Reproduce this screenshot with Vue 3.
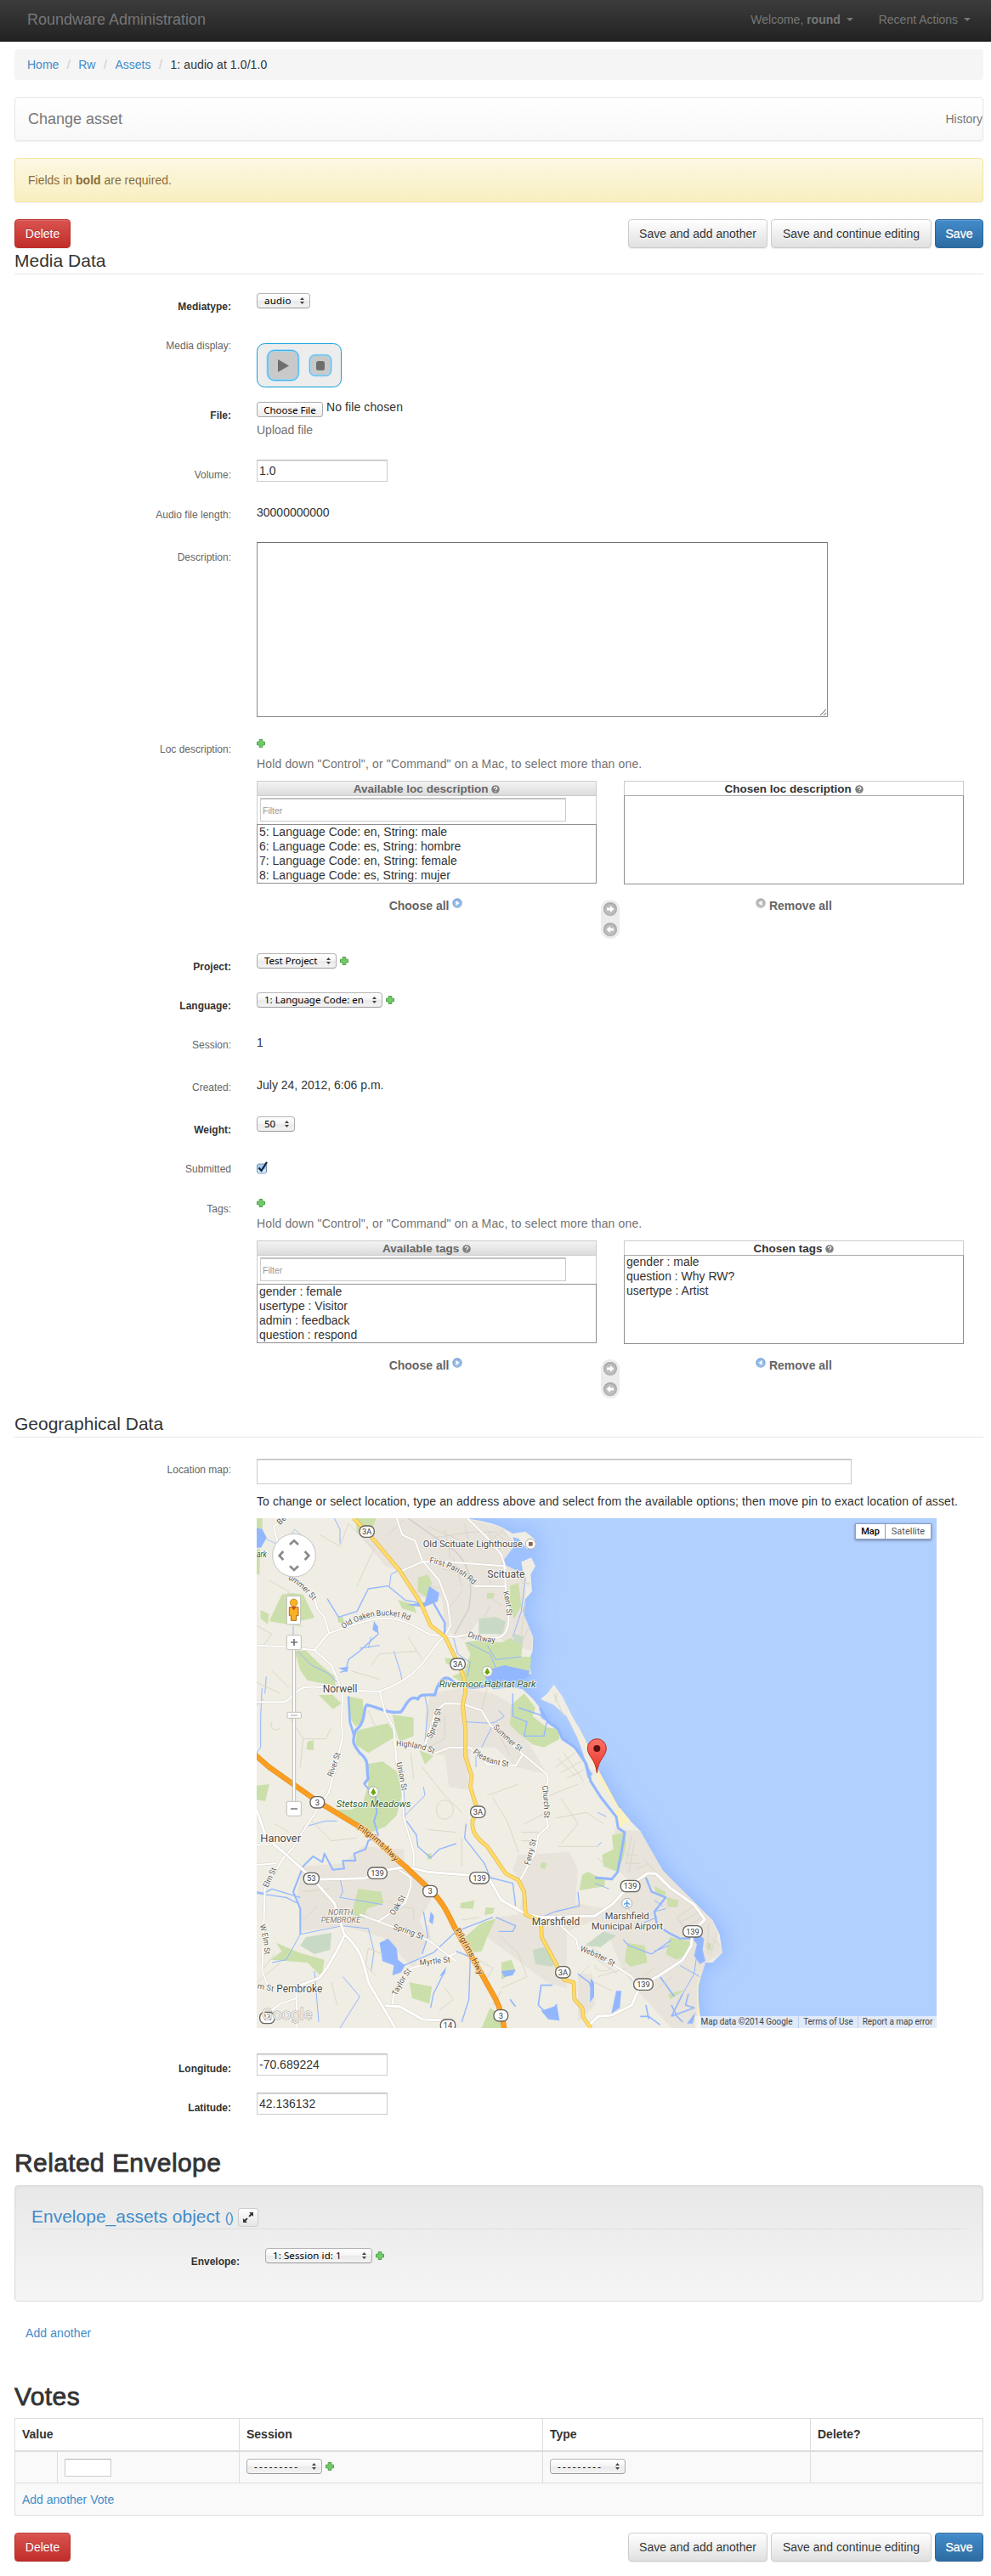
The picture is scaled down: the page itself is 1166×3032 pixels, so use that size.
<script setup>
import { h } from 'vue'

const Plus = () =>
  h('svg', { class: 'plus', width: 10, height: 10, viewBox: '0 0 10 10' }, [
    h('path', { d: 'M3.2.5h3.6v2.7h2.7v3.6H6.800v2.700H3.200V6.800H.5V3.200h2.700z', fill: '#74c96a', stroke: '#4aa546' }),
  ])

const Picker = (props) =>
  h('span', { class: 'picker', style: { width: props.w + 'px' } }, [
    h('span', { style: { letterSpacing: (props.ls || 0) + 'px' } }, props.text),
    h('svg', { width: 5, height: 8, viewBox: '0 0 5 8' }, [
      h('path', { d: 'M0 3L2.5 0 5 3zM0 5h5L2.5 8z', fill: '#444' }),
    ]),
  ])
Picker.props = ['w', 'text', 'ls']

const Help = () =>
  h('svg', { class: 'help', width: 10, height: 10, viewBox: '0 0 10 10' }, [
    h('circle', { cx: 5, cy: 5, r: 4.8, fill: '#808080' }),
    h('path', { d: 'M3.3 4c0-2.400 3.500-2.200 3.500-.2 0 1.200-1.700 1.200-1.700 2.200M5.100 7.200v1', stroke: '#fff', 'stroke-width': 1.200, fill: 'none' }),
  ])

const Round = (props) =>
  h('svg', { class: 'round', width: 12, height: 12, viewBox: '0 0 12 12' }, [
    h('circle', { cx: 6, cy: 6, r: 5.7, fill: props.on ? '#7ba7d8' : '#aaa' }),
    h('circle', { cx: 6, cy: 6.500, r: 4.500, fill: props.on ? '#98bde6' : '#c0c0c0' }),
    h('path', { d: props.left ? 'M7.500 3v6L3.500 6z' : 'M4.500 3v6l4-3z', fill: '#fff' }),
  ])
Round.props = ['on', 'left']

const Arrows = () =>
  h('svg', { class: 'arrows', width: 22, height: 46, viewBox: '0 0 22 46' }, [
    h('rect', { width: 22, height: 46, rx: 11, fill: '#ececec' }),
    h('circle', { cx: 11, cy: 11, r: 8, fill: '#aaa' }),
    h('circle', { cx: 11, cy: 11.500, r: 6.500, fill: '#bdbdbd' }),
    h('path', { d: 'M7 9.500h4V7l4.500 4-4.500 4v-2.500H7z', fill: '#fff' }),
    h('circle', { cx: 11, cy: 35, r: 8, fill: '#aaa' }),
    h('circle', { cx: 11, cy: 35.500, r: 6.500, fill: '#bdbdbd' }),
    h('path', { d: 'M15 33.500h-4V31l-4.500 4 4.500 4v-2.500h4z', fill: '#fff' }),
  ])

const selectors = {
  loc: {
    name: 'loc description',
    available: [
      '5: Language Code: en, String: male',
      '6: Language Code: es, String: hombre',
      '7: Language Code: en, String: female',
      '8: Language Code: es, String: mujer',
    ],
    chosen: [],
  },
  tags: {
    name: 'tags',
    available: ['gender : female', 'usertype : Visitor', 'admin : feedback', 'question : respond'],
    chosen: ['gender : male', 'question : Why RW?', 'usertype : Artist'],
  },
}

const land =
  'M36 21H770C800 25 870 35 905 55L940 75 985 68 1018 95 1015 125 990 130 960 92 940 88 948 112 918 140 895 160 905 195 935 222 975 205 970 175 1005 160 1020 190 1003 220 1008 280 985 305 975 350 995 400 1012 440 1010 490 998 520 1005 570 980 588 900 565 850 590 870 625 940 618 975 625 1012 660 1035 690 1040 725 1100 765 1115 800 1150 825 1190 880 1205 940 1240 910 1315 1045 1355 1090 1390 1125 1415 1180 1470 1265 1520 1320 1580 1375 1625 1425 1645 1440 1670 1490 1680 1555 1645 1590 1620 1590 1595 1620 1588 1690 1602 1780 1605 1821H36z'
const spit = 'M1038 660L1062 640 1085 608 1115 650 1150 720 1195 800 1245 915 1240 950 1205 900 1170 800 1130 720 1085 680z'

const urban = [
  'M400 80L470 21H770L905 55 945 120 900 180 985 220 985 300 975 350 1010 440 1005 490 900 450 830 370 770 450 740 440 700 400 690 300 610 300 540 205 490 190z',
  'M650 640L760 620 870 640 940 680 930 730 1000 820 1060 925 950 900 880 830 790 830 780 980 715 970 700 860 640 850 630 720z',
  'M200 1250L340 1240 410 1180 555 1190 560 1260 640 1300 650 1370 610 1440 640 1510 590 1610 480 1500 340 1460 190 1480 180 1340z',
  'M960 1210L1140 1200 1170 1260 1160 1380 1270 1400 1370 1320 1300 1250 1300 1120 1390 1125 1470 1265 1645 1440 1680 1555 1620 1590 1590 1690 1605 1821H1500L1390 1700 1330 1620 1280 1500 1230 1440 1130 1480 1130 1680 1060 1660 850 1500 880 1430 960 1420 980 1340 940 1260z',
  'M1170 1630h50l10 110-60 60z',
]
const greens = [
  'M385 21h75l-20 40-50 10z', 'M36 21h20v40H36z', 'M36 130h12l-2 90H36z', 'M80 385L125 290 160 285 200 290 240 372 160 390 205 405z', 'M50 345l30 15-5 35-25-20z',
  'M605 230l35-10 15 30-20 50-30-20z', 'M535 310l55 15 10 30-50-15z', 'M850 285h25l-5 20h-22z', 'M930 260l30-10 10 80-25 45-15-30z', 'M320 370l20 0 5 20-20 0z',
  'M770 460L830 450 900 460 930 445 975 460 970 510 1005 510 1000 575 880 560 830 620 760 600 725 580 770 560 790 500z', 'M700 515l35 0 10 30-40-10z',
  'M170 490l40-2 50 50 50 40 5 35-100-20-25-35z', 'M255 645l50 0 30 30-30 20z', 'M360 650L410 660 415 740 385 755 360 720z', 'M515 715l75 10v65l-50 20-15-50z', 'M390 770L500 745 530 790 430 850 385 820z', 'M215 810l22-5v35l-25-3z', 'M610 840l50 20-30 30z',
  'M935 680L980 640 1020 690 1010 720 1060 760 1100 765 1105 800 1050 830 1010 820 960 780 930 750z', 'M420 890L480 880 530 915 550 990 530 1070 490 1110 440 1130 380 1105 290 1050 370 1050 410 1030 430 960z',
  'M36 965l45-5-15 60-30-5z', 'M395 1330l80 10 10 40-60 20-10 35-45-15z', 'M105 1520l80 35 90 25-10 60-50-50-130-10 40-30z', 'M755 1380l50-10-5 30-45-2z', 'M845 1395l30 2-5 20-30 5z', 'M770 1500L830 1450 880 1435 850 1500 830 1550 790 1555z', 'M575 1660l80 15-10 60-60-20z', 'M900 1590l35-10 15 40-50 30z', 'M860 1750l30 20 10 51h-70z', 'M1185 1280l20-10 60 30v20l-90 15z',
  'M1290 1140l45-10 5 40-10 50-20 50-50-20-5-40 40-20z', 'M1440 1320l40 20-5 20-30-15z', 'M1485 1360l40 10-5 25-35-2z', 'M1495 1500L1565 1515 1555 1560 1520 1580 1480 1560z', 'M1345 1520l60 10 10 60-60 15-20-20z', 'M1490 1700l60-15-55 35z', 'M638 1205l15 0v20l-15 0z', 'M1040 1235l20 5-5 20-18-5z', 'M1625 1520l15 2v25l-15-5z',
]
const parks = ['M820 375L880 370 915 385 905 430 820 430z', 'M945 430l35 8-8 30-28-10z', 'M210 1500L300 1485 295 1545 240 1560 190 1530z', 'M1010 1545L1050 1535 1090 1580 1080 1605 1020 1595z', 'M1195 1530L1260 1480 1305 1495 1250 1535z']
const lakes = [
  'M645 260l35 25-5 30-50 20-60-8 65-10z', 'M36 55l20 5 15 30-20 35H36z', 'M450 385l15 20-5 20-15-10z', 'M325 550l35-5-5 20z', 'M470 1520L500 1505 530 1540 535 1580 560 1600 545 1625 515 1635 520 1600 480 1585z', 'M650 1410l12 15-5 30-12-10z', 'M680 1640l25-35-5 25z', 'M1040 1760l45-15 10-10 10 60-40-5z', 'M1215 1645l12 15v50l-15 20z', 'M1305 1690l18 0-5 60-30 20z', 'M840 560L910 540 1000 560 985 588 900 600 850 615z', 'M1570 1500l20-15 25 20-5 40 10 40-20 10-20-30 10-40z', 'M1585 1765l-30 40h20z', 'M900 1620l50-5-10 20-30 5z',
]
const rivers = [
  ['M1000 575L880 600C800 635 740 612 720 590 690 570 670 620 665 645 630 645 612 640 605 660 575 640 560 690 545 705 500 712 470 690 425 680 410 690 425 740 385 770 370 820 380 820 400 850 440 880 420 910 430 940L415 960', 10],
  ['M415 960L455 1000 460 1060 450 1090 465 1140 430 1160 420 1190 380 1205 385 1230 340 1230 345 1258 305 1262 275 1205 268 1235 235 1215 200 1250 165 1340 190 1400 190 1490', 6],
  ['M360 650L365 740 380 790', 8],
  ['M1035 690L1065 740 1100 765 1115 800 1160 830 1200 890 1215 950 1250 1005 1305 1075 1312 1115 1335 1130 1325 1190 1310 1270 1290 1295 1230 1290', 9],
  ['M1410 1290L1430 1340 1480 1360 1440 1410 1450 1460 1500 1490 1530 1505 1590 1505', 7],
  ['M1280 1330L1230 1310M1450 1430L1400 1450M1480 1400L1440 1410', 3],
  ['M310 21L330 60 330 110', 3], ['M285 305L325 370 390 350 430 270 500 260 560 310 640 325', 4], ['M505 260L510 220 545 200', 3],
  ['M660 320L700 390 700 430', 7], ['M460 400L465 430 400 490 360 520 350 560 330 565', 4], ['M400 480L470 470M430 480L440 440', 3], ['M520 490L545 570 550 600', 3],
  ['M730 440L745 500 790 530 780 580M780 460L860 500 880 550 960 560M850 470L880 520 970 510M940 440L970 350 985 230', 3],
  ['M630 650L640 700 630 810', 3], ['M775 740L860 745 880 740 910 720 890 700M870 750L830 830M810 860l0 40', 3], ['M940 640L940 720 990 740 980 790 1050 790 1060 740M960 690L1050 720', 4],
  ['M55 620L50 720 50 830 36 850M70 580l-5 60', 3], ['M165 400L165 480M180 490L230 540 290 570 320 600', 3],
  ['M565 1090L600 1140 605 1180 650 1220 680 1190 740 1170', 4], ['M555 1075L630 1000 625 970', 3], ['M555 980L560 1080', 3],
  ['M36 1340L60 1345 90 1330 190 1360M36 1345L140 1360 180 1380', 4], ['M330 1290L340 1340 330 1360 480 1385', 3], ['M160 1190L205 1110 280 1090 320 1090', 3],
  ['M190 1490L340 1460 430 1470 450 1550 440 1620M190 1490L140 1580 90 1590M240 1620L250 1740 255 1800M340 1640L400 1710 330 1821', 3],
  ['M555 1600L660 1555 740 1480 870 1430M625 1410L640 1500 620 1560M740 1550L790 1570 785 1720 760 1800M700 1620L660 1700 650 1750', 4],
  ['M775 1100L770 1150 840 1240 860 1290 940 1310 950 1390M880 1430L950 1460 940 1480 890 1480', 4], ['M1170 1340L1175 1390 1090 1410 1040 1430', 4],
  ['M1030 1740L1040 1670 1080 1670M1030 1740L1060 1770M1170 1630L1210 1660 1225 1700M930 1720L950 1745', 5],
  ['M1430 1560L1350 1530 1330 1510M1430 1560L1500 1510M1440 1550L1490 1530', 4], ['M1590 1560L1580 1630 1540 1700M1530 1600L1600 1640', 3],
  ['M1390 1780L1420 1780 1460 1810M1410 1740L1420 1790M1500 1740L1520 1780 1540 1800M1540 1700L1500 1780M1460 1640L1510 1710M1560 1700L1550 1740 1580 1750 1500 1780', 5],
  ['M1240 1060L1270 1075M1238 1180l15-15M1470 1390L1440 1370', 3], ['M36 680L60 660M130 120L170 60 240 120M36 80l90 40', 2],
]
const lanes = [
  'M640 50L830 130M660 90L790 70 880 70M700 60L720 160M770 40L790 130M850 60L870 110 940 100M820 120L900 130M690 200L790 220M730 160L760 260M850 290L900 330M860 200L860 260',
  'M80 240L150 280 110 360M260 80L330 120 360 40 450 130 390 260M36 400L90 430 60 470M90 560L150 620M370 560L470 590M300 760L280 800 200 800M440 540L470 500 600 490M430 700L470 790 430 820M570 440L620 520',
  'M90 740a18 18 0 1 0 30 20M150 720L200 800 190 900M700 720L700 800 640 830M850 620L830 700M880 760L930 860M36 600L120 640M580 850L590 940M670 1050a30 34 0 1 0 60 0a30 34 0 1 0-60 0M620 900L700 1000 760 1060M870 1010L920 1090 960 1200M850 1000L960 960M980 1100L1060 1060M760 1150L760 1250M640 1120L740 1130',
  'M970 1130h60v30h-60M100 1100L150 1130M230 1090L300 1160 390 1150M200 1340L290 1330M250 1390L200 1440M420 1410L440 1440M500 1370L540 1400M540 1390L590 1400 590 1440M640 1460L650 1520M820 1580L870 1610 840 1660M900 1690L870 1740M480 1560L430 1540 420 1600 460 1640M700 1680L730 1720 680 1760M100 1560L60 1610M36 1660L120 1590M300 1660L320 1740M960 1560L990 1640 900 1680M900 1500L960 1560M760 1440L820 1430',
  'M1070 1000L1170 960M1090 1080L1200 1060 1260 1100M1110 1010L1170 1100 1110 1170M1100 1180L1240 1180M1240 1220L1280 1260M1360 1140L1340 1240 1390 1240M1370 1160L1350 1270M1340 1210h40M1400 1220L1460 1290M1380 1260L1420 1240M1530 1450L1600 1410M1520 1430L1580 1390M1540 1470L1610 1430M1550 1480L1520 1430M1570 1500L1530 1440M1500 1370L1480 1400M1230 1600a30 20 0 1 0 60 0M1240 1640L1340 1610M1230 1660L1290 1690M1200 1520L1250 1560M1240 1580L1310 1630M1180 1630L1210 1600M1440 1610L1400 1640M1500 1640L1440 1690M1630 1450L1630 1560M1660 1480L1640 1560M1640 1500L1670 1530',
  'M1090 900L1160 850M1110 920L1180 880M1130 940L1190 910M1100 870L1160 930M1120 850L1190 950M1085 640L1120 720M1095 640L1090 670',
  'M870 80L900 110M880 70L920 105M890 60L935 95M860 100L910 60M960 230L1000 260M970 250h30M985 320L970 430M995 410L970 460M560 21L500 80M700 270L640 260M760 280L720 330M860 330L840 370',
]
const roads = [
  'M36 670H120C160 670 170 625 205 618 280 610 320 632 470 632 530 610 590 580 640 510 670 470 670 460 700 440',
  'M36 470L130 475 240 487 270 450 290 428C350 405 430 380 470 375 560 370 600 410 650 432L740 440 790 430 840 450 890 442C920 430 928 400 925 360L915 270 910 190',
  'M130 30L95 50 140 210 240 300 250 340 275 370 292 428',
  'M240 487L300 540 325 600 340 650 335 740 340 790 315 900 290 990 250 1050 210 1110 160 1190 130 1220 65 1330 60 1500 55 1620 75 1670',
  'M530 21L550 80 595 100 620 170 680 240 710 320 720 400 700 438', 'M545 208L620 175 700 175 910 190M800 260L915 262', 'M780 21L850 90 900 150 915 200',
  'M470 632L490 710 520 760 530 880 550 980 555 1080 590 1200 590 1250M560 1250L535 1260 580 1290 580 1320 560 1380 465 1445 400 1420',
  'M630 820L670 700 700 675 765 677 830 700 860 750 970 850 1060 925 1065 950 1045 1000 1065 1110 1030 1140 1020 1200 965 1300', 'M665 850L720 830 790 832 850 890 950 895 975 855',
  'M36 1175L95 1172M36 1245L105 1240M175 1680L178 1821M178 1715L120 1735 60 1780', 'M515 1742L520 1690 580 1610 700 1575 740 1555', 'M465 1445L560 1480 640 1510 740 1585', 'M1110 1460L1165 1510 1170 1540 1300 1600 1360 1640 1380 1670',
]
const mainRoads = [
  'M230 1297L420 1292 480 1265 570 1252 640 1270 790 1282 860 1300 900 1370 985 1418 1040 1430 1230 1425 1290 1385 1350 1320 1415 1275 1445 1276 1500 1330 1580 1385 1618 1438 1575 1480 1570 1530 1540 1580 1450 1640 1390 1670 1360 1740 1290 1776 1240 1780 1200 1821',
  'M36 1050L70 1150 130 1200 225 1285 310 1380 345 1490C400 1540 410 1570 430 1660L525 1821', 'M345 1495C310 1570 280 1620 255 1645L175 1675', 'M490 1742L540 1745 620 1790 710 1795',
]
const yellowRoad =
  'M378 21L425 68 540 205 615 320 650 400 700 438 740 520C770 580 775 600 772 640L763 680 772 760V860L795 930 790 970 815 1050 798 1090C795 1120 800 1140 850 1180L915 1275 960 1300 980 1340 985 1420 1040 1445 1042 1500 1085 1580 1120 1650 1155 1660 1158 1720 1185 1750 1190 1785 1215 1821'
const orangeRoad = 'M30 856L78 898 165 960 250 1020 390 1105C450 1140 520 1220 560 1250L650 1335C700 1380 720 1440 740 1475L830 1630 880 1720C900 1760 905 1790 910 1825'

// [text, left, baseline, width, size, kind]
const places = [
  ['Old Scituate Lighthouse', 623, 124, 352, 32, 'poi'],
  ['Scituate', 850, 231, 132, 36, 'town'],
  ['Norwell', 269, 635, 122, 36, 'town'],
  ['Hanover', 49, 1163, 143, 36, 'town'],
  ['Pembroke', 106, 1695, 162, 36, 'town'],
  ['Marshfield', 1007, 1458, 170, 36, 'town'],
  ['Rivermoor Habitat Park', 680, 617, 342, 30, 'park'],
  ['Stetson Meadows', 317, 1042, 263, 30, 'park'],
  ['ark', 36, 158, 35, 30, 'park'],
  ['NORTH', 288, 1423, 88, 27, 'area'],
  ['PEMBROKE', 263, 1450, 140, 27, 'area'],
  ['Marshfield', 1265, 1437, 156, 32, 'poi'],
  ['Municipal Airport', 1218, 1473, 252, 32, 'poi'],
]
// [text, x0, y0, control x, control y, x1, y1, kind]
const streetData = [
  ['Be', 118, 46, 130, 35, 142, 24],
  ['ummer St', 146, 236, 195, 262, 234, 312],
  ['Old Oaken Bucket Rd', 342, 412, 460, 335, 575, 382],
  ['First Parish Rd', 645, 178, 740, 195, 800, 256],
  ['Kent St', 905, 282, 918, 320, 918, 366],
  ['Driftway', 779, 438, 830, 462, 878, 458],
  ['Spring St', 652, 800, 680, 750, 686, 694],
  ['Summer St', 870, 760, 915, 810, 965, 845],
  ['Highland St', 528, 826, 600, 826, 660, 852],
  ['Pleasant St', 798, 850, 850, 892, 925, 898],
  ['River St', 303, 935, 318, 893, 332, 852],
  ['Union St', 529, 885, 540, 930, 548, 984],
  ['Church St', 1043, 966, 1052, 1020, 1050, 1080],
  ['Ferry St', 1000, 1247, 1010, 1200, 1024, 1158],
  ['Elm St', 75, 1327, 90, 1295, 106, 1260],
  ['W Elm St', 46, 1458, 60, 1500, 64, 1562],
  ['Oak St', 520, 1425, 541, 1394, 562, 1358],
  ['Spring St', 517, 1472, 570, 1485, 620, 1510],
  ['Myrtle St', 612, 1600, 666, 1594, 720, 1588],
  ['Taylor St', 530, 1708, 550, 1660, 583, 1620],
  ['m St', 38, 1682, 65, 1686, 95, 1692],
  ['Webster St', 1176, 1548, 1240, 1570, 1294, 1604],
  ['Pilgrims Hwy', 390, 1118, 470, 1165, 524, 1234, 'hwy'],
  ['Pilgrims Hwy', 735, 1477, 780, 1545, 820, 1634, 'hwy'],
]
const curveLength = (x0, y0, cx, cy, x1, y1) => {
  let sum = 0
  let px = x0
  let py = y0
  for (let i = 1; i <= 20; i++) {
    const t = i / 20
    const x = (1 - t) * (1 - t) * x0 + 2 * t * (1 - t) * cx + t * t * x1
    const y = (1 - t) * (1 - t) * y0 + 2 * t * (1 - t) * cy + t * t * y1
    sum += Math.hypot(x - px, y - py)
    px = x
    py = y
  }
  return sum
}
const streets = streetData.map(([text, x0, y0, cx, cy, x1, y1, kind]) => {
  const len = curveLength(x0, y0, cx, cy, x1, y1)
  // the guide runs a little past its end so that the last letter always fits
  const ex = ((x1 - cx) / Math.hypot(x1 - cx, y1 - cy)) * 20
  const ey = ((y1 - cy) / Math.hypot(x1 - cx, y1 - cy)) * 20
  return { text, len: len.toFixed(1), kind: kind || 'street', d: `M${x0} ${y0}Q${cx} ${cy} ${x1} ${y1}l${ex} ${ey}` }
})
const shields = [
  ['3A', 425, 68, 52], ['3A', 746, 536, 52], ['3A', 817, 1058, 52], ['3A', 1117, 1624, 52],
  ['3', 250, 1024, 50], ['3', 648, 1338, 50], ['3', 898, 1777, 50],
  ['53', 229, 1293, 54], ['139', 462, 1274, 68], ['139', 822, 1291, 68], ['139', 1355, 1320, 68], ['139', 1575, 1480, 68], ['139', 1401, 1667, 68],
  ['14', 73, 1785, 52], ['14', 711, 1811, 52],
]
</script>

<template>
  <div class="page">
    <nav class="navbar">
      <a class="brand">Roundware Administration</a>
      <div class="nav-right">
        <a>Welcome, <b>round</b> <i class="caret"></i></a>
        <a>Recent Actions <i class="caret"></i></a>
      </div>
    </nav>

    <main class="content">
      <ol class="breadcrumb">
        <li><a>Home</a></li>
        <li><a>Rw</a></li>
        <li><a>Assets</a></li>
        <li class="here">1: audio at 1.0/1.0</li>
      </ol>

      <header class="titlebar"><span class="title">Change asset</span><span>History</span></header>
      <div class="notice">Fields in <b>bold</b> are required.</div>

      <div class="actions">
        <button class="btn danger">Delete</button>
        <span class="gap"></span>
        <button class="btn wide1">Save and add another</button>
        <button class="btn wide2">Save and continue editing</button>
        <button class="btn primary">Save</button>
      </div>

      <h3 class="legend">Media Data</h3>
      <section class="form">
        <div class="row h46"><label class="req">Mediatype:</label><div class="ctl sel"><Picker :w="63" text="audio" :ls="0.2" /></div></div>
        <div class="row h82">
          <label>Media display:</label>
          <div class="ctl">
            <div class="player">
              <svg width="100" height="52" viewBox="0 0 100 52">
                <rect x=".5" y=".5" width="99" height="51" rx="9" fill="#ededed" stroke="#129fdc" />
                <rect x="13" y="8.500" width="36" height="35" rx="8" fill="#c9c9c9" stroke="#a5d8f5" stroke-width="3" />
                <rect x="13" y="8.500" width="36" height="35" rx="8" fill="none" stroke="#3fb0ea" />
                <path d="M25 19v15l13-7.500z" fill="#6e6e6e" />
                <rect x="62.500" y="14" width="25" height="24" rx="6" fill="#c9c9c9" stroke="#a5d8f5" stroke-width="2.500" />
                <rect x="62.500" y="14" width="25" height="24" rx="6" fill="none" stroke="#5fbbe8" />
                <rect x="70" y="21" width="10" height="11" rx="2.500" fill="#6e6e6e" />
              </svg>
            </div>
          </div>
        </div>
        <div class="row h70">
          <label class="req">File:</label>
          <div class="ctl sel">
            <div class="file"><span class="choose">Choose File</span><span>No file chosen</span></div>
            <p class="muted upload">Upload file</p>
          </div>
        </div>
        <div class="row h47"><label>Volume:</label><div class="ctl"><div class="input">1.0</div></div></div>
        <div class="row h50"><label>Audio file length:</label><div class="ctl val">30000000000</div></div>
        <div class="row h226">
          <label>Description:</label>
          <div class="ctl">
            <div class="area"><svg width="9" height="9" viewBox="0 0 9 9"><path d="M1 8L8 1M5 8l3-3" stroke="#666" fill="none" /></svg></div>
          </div>
        </div>
        <div v-for="(s, key) in { loc: selectors.loc }" :key="key" class="row h256">
          <label>Loc description:</label>
          <div class="ctl add">
            <Plus />
            <p class="muted hold">Hold down "Control", or "Command" on a Mac, to select more than one.</p>
            <div class="dual">
              <div class="col">
                <h4 class="grad">Available {{ s.name }} <Help /></h4>
                <div class="filter"><div class="finput">Filter</div></div>
                <ul class="list"><li v-for="o in s.available" :key="o">{{ o }}</li></ul>
                <div class="all">Choose all <Round :on="true" /></div>
              </div>
              <Arrows />
              <div class="col">
                <h4>Chosen {{ s.name }} <Help /></h4>
                <ul class="list tall"></ul>
                <div class="all rem"><Round :left="true" /> Remove all</div>
              </div>
            </div>
          </div>
        </div>
        <div class="row h46"><label class="req">Project:</label><div class="ctl sel"><Picker :w="94" text="Test Project" /><Plus /></div></div>
        <div class="row h46"><label class="req">Language:</label><div class="ctl sel"><Picker :w="148" text="1: Language Code: en" /><Plus /></div></div>
        <div class="row h50"><label>Session:</label><div class="ctl val">1</div></div>
        <div class="row h50"><label>Created:</label><div class="ctl val">July 24, 2012, 6:06 p.m.</div></div>
        <div class="row h46"><label class="req">Weight:</label><div class="ctl sel"><Picker :w="45" text="50" /></div></div>
        <div class="row h47">
          <label>Submitted</label>
          <div class="ctl">
            <svg class="check" width="14" height="15" viewBox="0 0 14 15">
              <rect x=".5" y="3" width="11" height="11" rx="2" fill="#a5cdf3" stroke="#7d93b0" />
              <rect x="1" y="9" width="10" height="4.500" rx="1.500" fill="#c9e9fd" />
              <path d="M2.500 7.500L5.500 11 12 .8" fill="none" stroke="#10243c" stroke-width="2.200" />
            </svg>
          </div>
        </div>
        <div v-for="(s, key) in { tags: selectors.tags }" :key="key" class="row h256">
          <label>Tags:</label>
          <div class="ctl add">
            <Plus />
            <p class="muted hold">Hold down "Control", or "Command" on a Mac, to select more than one.</p>
            <div class="dual">
              <div class="col">
                <h4 class="grad">Available {{ s.name }} <Help /></h4>
                <div class="filter"><div class="finput">Filter</div></div>
                <ul class="list"><li v-for="o in s.available" :key="o">{{ o }}</li></ul>
                <div class="all">Choose all <Round :on="true" /></div>
              </div>
              <Arrows />
              <div class="col">
                <h4>Chosen {{ s.name }} <Help /></h4>
                <ul class="list tall"><li v-for="o in s.chosen" :key="o">{{ o }}</li></ul>
                <div class="all rem"><Round :on="true" :left="true" /> Remove all</div>
              </div>
            </div>
          </div>
        </div>
      </section>

      <h3 class="legend">Geographical Data</h3>
      <section class="form geo">
        <div class="row h705">
          <label>Location map:</label>
          <div class="ctl loc">
            <div class="input address"></div>
            <p class="hint">To change or select location, type an address above and select from the available options; then move pin to exact location of asset.</p>
            <div class="map">
              <svg width="800" height="600" viewBox="36 21 2400 1800">
                <defs>
                  <filter id="shore" x="-20%" y="-20%" width="140%" height="140%"><feGaussianBlur stdDeviation="32" /></filter>
                  <linearGradient id="pin" x1="0" y1="0" x2="0" y2="1"><stop offset="0" stop-color="#fc7267" /><stop offset="1" stop-color="#e93226" /></linearGradient>
                </defs>
                <rect x="36" y="21" width="2400" height="1800" fill="#b1d0ff" />
                <path :d="land" fill="#8fb6ff" stroke="#9dc0ff" stroke-width="50" filter="url(#shore)" />
                <g fill="#efede4"><path :d="land" /><path :d="spit" /></g>
                <path v-for="d in urban" :key="d" :d="d" fill="#e8e3db" />
                <path v-for="d in greens" :key="d" :d="d" fill="#cbdfaa" />
                <path v-for="d in parks" :key="d" :d="d" fill="#c8dac5" />
                <path d="M1298 1055l20-12 37 46-42 28-4-35zM1240 905l75 138-6 4-70-110zM1620 1596c-35 30-25 130-18 225l-8 0c-4-90-15-190 26-225M1165 740l75 160-8 10z" fill="#fbf0c0" />
                <path v-for="d in lakes" :key="d" :d="d" fill="#93b7ff" />
                <path v-for="r in rivers" :key="r[0]" :d="r[0]" fill="none" stroke="#93b7ff" :stroke-width="r[1]" stroke-linejoin="round" />
                <path v-for="d in lanes" :key="d" :d="d" fill="none" stroke="#dcd7cb" stroke-width="3" stroke-linejoin="round" />
                <path d="M570 21L740 140C790 190 800 260 785 340L735 430" fill="none" stroke="#cfcdca" stroke-width="4" />
                <g fill="none" stroke-linejoin="round">
                  <path v-for="d in roads" :key="d" :d="d" stroke="#d9d4c9" stroke-width="9" />
                  <path v-for="d in roads" :key="d" :d="d" stroke="#fff" stroke-width="6" />
                  <path v-for="d in mainRoads" :key="d" :d="d" stroke="#d3cec3" stroke-width="12" />
                  <path v-for="d in mainRoads" :key="d" :d="d" stroke="#fff" stroke-width="9" />
                  <path :d="yellowRoad" stroke="#e2b54d" stroke-width="14" />
                  <path :d="yellowRoad" stroke="#ffdc68" stroke-width="10" />
                  <path :d="orangeRoad" stroke="#e48a16" stroke-width="19" />
                  <path :d="orangeRoad" stroke="#fb9f22" stroke-width="15" />
                </g>
                <g v-for="(s, i) in streets" :key="i">
                  <path :id="'st' + i" :d="s.d" fill="none" />
                  <text :class="s.kind" :textLength="s.len" lengthAdjust="spacingAndGlyphs"><textPath :href="'#st' + i">{{ s.text }}</textPath></text>
                </g>
                <g v-for="(s, i) in shields" :key="'s' + i">
                  <rect :x="s[1] - s[3] / 2" :y="s[2] - 20" :width="s[3]" height="40" rx="18" fill="#fff" stroke="#66645f" stroke-width="4" />
                  <text :x="s[1]" :y="s[2] + 10" text-anchor="middle" class="shield">{{ s[0] }}</text>
                </g>
                <g stroke="#b3b0a9" stroke-width="3" fill="#fff">
                  <circle cx="1003" cy="112" r="18" /><circle cx="850" cy="562" r="18" /><circle cx="448" cy="987" r="18" /><circle cx="1343" cy="1381" r="18" />
                </g>
                <rect x="996" y="105" width="14" height="14" fill="#8f6653" />
                <path d="M850 551l8 16h-6v5h-4v-5h-6zM448 976l8 16h-6v5h-4v-5h-6z" fill="#67a800" stroke="#67a800" stroke-width="3" />
                <path d="M1343 1369v24M1332 1385l11-7 11 7M1337 1393l6-3 6 3" stroke="#5ba3e8" stroke-width="4" fill="none" />
                <text v-for="(p, i) in places" :key="'p' + i" :x="p[1]" :y="p[2]" :textLength="p[3]" lengthAdjust="spacingAndGlyphs" :font-size="p[4]" :class="p[5]">{{ p[0] }}</text>

                <path d="M1237 920C1232 870 1204 862 1204 833a33 33 0 0 1 66 0C1270 862 1242 870 1237 920z" fill="url(#pin)" stroke="#b52b22" stroke-width="3" />
                <circle cx="1237" cy="834" r="12" fill="#5a1210" />

                <circle cx="168" cy="152" r="76" fill="#fff" stroke="#c7c4be" stroke-width="3" />
                <path d="M153 114l15-14 15 14M153 190l15 14 15-14M130 138l-14 15 14 15M206 138l14 15-14 15" fill="none" stroke="#8a8a8a" stroke-width="8" />
                <g fill="#fff" stroke="#c2bfb9" stroke-width="3">
                  <rect x="142" y="296" width="49" height="100" rx="5" />
                  <path d="M163 484h10v540h-10z" />
                  <rect x="142" y="434" width="51" height="51" rx="5" />
                  <rect x="144" y="706" width="49" height="21" rx="4" />
                  <rect x="142" y="1021" width="51" height="51" rx="5" />
                </g>
                <path d="M156 459h24M168 447v24M156 1047h24" stroke="#757575" stroke-width="5" />
                <path d="M156 717h25" stroke="#c4c4c4" stroke-width="5" />
                <path d="M151 335h32v30h-7v17h-19v-17h-6z" fill="#f9b021" stroke="#a96c12" stroke-width="3" />
                <path d="M158 334l9 12 9-12z" fill="#d8431f" />
                <circle cx="167" cy="319" r="13" fill="#fbb524" stroke="#a96c12" stroke-width="2" />
                <text x="54" y="1790" class="google" textLength="178">Google</text>
              </svg>
              <div class="maptype"><b>Map</b><span>Satellite</span></div>
              <div class="credits"><span class="c1">Map data ©2014 Google</span><span class="c2">Terms of Use</span><span class="c3">Report a map error</span></div>
            </div>
          </div>
        </div>
        <div class="row h46"><label class="req">Longitude:</label><div class="ctl"><div class="input">-70.689224</div></div></div>
        <div class="row h46"><label class="req">Latitude:</label><div class="ctl"><div class="input">42.136132</div></div></div>
      </section>

      <h2 class="h2 related">Related Envelope</h2>
      <section class="panel">
        <div class="panel-title">
          <span>Envelope_assets object <small>()</small></span>
          <span class="expand"><svg width="14" height="14" viewBox="0 0 14 14"><path d="M13 1v5L11.300 4.300 8.800 6.600 7.400 5.200 9.800 2.700 8 1zM1 13V8l1.700 1.700 2.500-2.300 1.400 1.400-2.400 2.500L6 13z" fill="#333" /></svg></span>
        </div>
        <div class="row prow"><label class="req">Envelope:</label><div class="ctl sel"><Picker :w="126" text="1: Session id: 1" :ls="0.1" /><Plus /></div></div>
      </section>
      <a class="addlink">Add another</a>

      <h2 class="h2 votes">Votes</h2>
      <table class="table">
        <colgroup><col style="width: 50px" /><col style="width: 214px" /><col style="width: 357px" /><col style="width: 315px" /><col /></colgroup>
        <thead><tr><th colspan="2">Value</th><th>Session</th><th>Type</th><th>Delete?</th></tr></thead>
        <tbody>
          <tr class="entry">
            <td></td>
            <td><div class="tiny"></div></td>
            <td><div class="cell"><Picker :w="89" text="---------" :ls="2.2" /><Plus /></div></td>
            <td><div class="cell"><Picker :w="89" text="---------" :ls="2.2" /></div></td>
            <td></td>
          </tr>
          <tr class="more"><td colspan="5"><a>Add another Vote</a></td></tr>
        </tbody>
      </table>

      <div class="actions bottom">
        <button class="btn danger">Delete</button>
        <span class="gap"></span>
        <button class="btn wide1">Save and add another</button>
        <button class="btn wide2">Save and continue editing</button>
        <button class="btn primary">Save</button>
      </div>
    </main>
  </div>
</template>

<style>
body { margin: 0; background: #fff; }
.plus { display: block; flex: none; }
.picker {
  display: inline-flex; align-items: center; justify-content: space-between; box-sizing: border-box;
  height: 18px; padding: 0 6px 0 8px; border: 1px solid #a9a9a9; border-color: #b5b5b5 #ababab #999;
  border-radius: 4px; background: linear-gradient(#fff, #f4f4f4 50%, #eaeaea 50%, #f3f3f3);
  font: 11.5px/16px "Noto Sans", sans-serif; color: #000; white-space: nowrap; flex: none;
}
.help { vertical-align: -1px; }
.round { vertical-align: 2px; }
.arrows { margin-top: 140px; flex: none; }
</style>

<style scoped>
.page { width: 1166px; height: 3032px; overflow: hidden; font: 14px/20px "Liberation Sans", Arial, sans-serif; color: #333; background: #fff; }
p, h2, h3, h4, ul, ol { margin: 0; padding: 0; font-weight: normal; list-style: none; }
a { color: #428bca; }
.navbar { height: 48px; display: flex; justify-content: space-between; padding: 0 24px 0 32px; border-bottom: 1px solid #080808; background: linear-gradient(#3c3c3c, #222); }
.brand { font-size: 18px; line-height: 46px; color: #777; }
.nav-right { display: flex; gap: 30px; line-height: 47px; }
.nav-right a { color: #777; }
.caret { display: inline-block; margin-left: 3px; vertical-align: 3px; border: 4px solid transparent; border-top-color: #777; border-bottom: 0; }
.content { padding: 9px 9px 0 17px; }
.breadcrumb { display: flex; height: 36px; padding-left: 15px; border-radius: 4px; background: #f5f5f5; line-height: 36px; }
.breadcrumb li + li::before { content: "/"; color: #ccc; padding: 0 9.500px; }
.here { letter-spacing: .1px; }
.titlebar, .notice { box-sizing: border-box; height: 52px; margin-top: 20px; border: 1px solid #e7e7e7; border-radius: 4px; line-height: 50px; padding-left: 15px; box-shadow: 0 1px 2px rgba(0, 0, 0, .06); }
.titlebar { display: flex; justify-content: space-between; color: #777; background: linear-gradient(#fff, #f8f8f8); }
.title { font-size: 18px; }
.notice { border-color: #f5e79e; background: linear-gradient(#fcf8e3, #f8efc0); color: #8a6d3b; }
.actions { display: flex; gap: 4px; margin-top: 20px; }
.gap { flex: 1; }
.btn { box-sizing: border-box; height: 34px; padding: 0; border: 1px solid #ccc; border-radius: 4px; background: linear-gradient(#fff, #e0e0e0); color: #333; font: 14px/32px "Liberation Sans", Arial, sans-serif; text-align: center; box-shadow: inset 0 1px 0 rgba(255, 255, 255, .15), 0 1px 1px rgba(0, 0, 0, .075); text-shadow: 0 1px 0 #fff; white-space: nowrap; }
.wide1 { width: 164px; }
.wide2 { width: 189px; }
.danger { width: 66px; border-color: #b92c28; background: linear-gradient(#d9534f, #c12e2a); color: #fff; text-shadow: 0 -1px 0 rgba(0, 0, 0, .2); }
.primary { width: 57px; border-color: #2b669a; background: linear-gradient(#428bca, #2d6ca2); color: #fff; text-shadow: 0 -1px 0 rgba(0, 0, 0, .2); -webkit-text-stroke: .3px #fff; }
.legend { height: 30px; border-bottom: 1px solid #e5e5e5; font-size: 21px; line-height: 30px; }
.form { padding-top: 20px; }
.row { display: flex; box-sizing: border-box; }
.row > label { width: 255px; margin-right: 30px; padding-top: 10px; flex: none; text-align: right; font-size: 12px; line-height: 16px; color: #666; }
.row > .req { font-weight: bold; color: #333; }
.h46 { height: 46px; } .h47 { height: 47px; } .h50 { height: 50px; } .h70 { height: 70px; } .h82 { height: 82px; } .h226 { height: 226px; } .h256 { height: 256px; } .h705 { height: 705px; }
.ctl { flex: none; }
.sel { padding-top: 2px; }
.h46 > .sel, .prow > .sel { display: flex; gap: 4px; align-items: flex-start; }
.sel > .plus { margin-top: 4px; }
.player { padding-top: 15px; height: 52px; }
.val { padding-top: 5px; }
.file { display: flex; gap: 4px; height: 18px; line-height: 16px; }
.file > span:last-child { line-height: 17px; margin-top: -2px; letter-spacing: .1px; }
.choose { box-sizing: border-box; width: 78px; height: 18px; border: 1px solid #aaa; border-radius: 3px; background: linear-gradient(#fff, #ececec); text-align: center; font: 11.500px/17px "Noto Sans", sans-serif; color: #000; }
.muted { color: #737373; }
.upload { padding-top: 5px; }
.input { box-sizing: border-box; width: 154px; height: 26px; border: 1px solid #ccc; border-top-color: #b9b9b9; box-shadow: inset 0 1px 1px rgba(0, 0, 0, .12); padding-left: 2px; line-height: 24px; }
.area { box-sizing: border-box; width: 672px; height: 206px; border: 1px solid #8a8a8a; border-top-color: #707070; display: flex; justify-content: flex-end; align-items: flex-end; }
.add { padding-top: 6px; }
.hold { margin-top: 9px; letter-spacing: .15px; }
.dual { display: flex; margin-top: 10px; gap: 5px; }
.col { width: 400px; flex: none; }
.dual h4 { box-sizing: border-box; height: 17px; border: 1px solid #ccc; border-bottom: 0; text-align: center; font-weight: bold; line-height: 17px; font-size: 13.500px; }
.dual .grad { color: #666; background: linear-gradient(#f3f3f3, #dcdcdc); }
.filter { box-sizing: border-box; height: 34px; border: 1px solid #ccc; border-bottom: 0; padding: 2px 3px; }
.finput { box-sizing: border-box; width: 360px; height: 28px; border: 1px solid #ccc; border-top: 2px solid #c4c4c4; padding-left: 2px; font-size: 10.500px; line-height: 26px; color: #999; }
.list { box-sizing: border-box; height: 70px; border: 1px solid #8e8e8e; padding: 0 2px; line-height: 17px; }
.list.tall { height: 105px; border-top-color: #aaa; }
.tall li:first-child { margin-top: -1px; }
.all { margin-top: 16px; text-align: center; font-weight: bold; line-height: 20px; color: #666; padding-right: 2px; }
.all.rem { margin-top: 15px; padding-right: 0; }
.check { display: block; margin-top: 9px; }
.loc { padding-top: 5px; }
.address { width: 700px; height: 30px; }
.hint { margin-top: 10px; white-space: nowrap; height: 30px; letter-spacing: .1px; }
.map { position: relative; width: 800px; height: 600px; }
.map svg { display: block; }
.map text { font-family: Roboto, sans-serif; paint-order: stroke; stroke-linejoin: round; }
.town { fill: #4f4a40; stroke: #fff; stroke-width: 6px; stroke-opacity: .85; }
.poi { fill: #4f4a40; stroke: #fff; stroke-width: 6px; stroke-opacity: .85; }
.park { fill: #2d5f30; font-style: italic; stroke: #fff; stroke-width: 5px; stroke-opacity: .8; }
.area { fill: #85796a; }
text.area { font-style: italic; stroke: #fff; stroke-width: 5px; stroke-opacity: .7; }
.street { font-size: 28px; fill: #5f5b52; stroke: #fff; stroke-width: 5px; stroke-opacity: .8; }
.hwy { font-size: 28px; fill: #7a4a10; stroke: #fdd79b; stroke-width: 6px; }
.shield { font-size: 28px; fill: #3c3a37; }
.google { font-size: 56px; fill: #fff; fill-opacity: .8; stroke: #a5a39d; stroke-width: 3px; }
.maptype { position: absolute; top: 6px; right: 6px; display: flex; font: 11px/17px Roboto, sans-serif; color: #565656; box-shadow: 0 1px 3px rgba(0, 0, 0, .4); background: #fff; border: 1px solid #8a9fc4; }
.maptype b { width: 34px; text-align: center; color: #000; border-right: 1px solid #8a9fc4; font-weight: 500; }
.maptype span { width: 53px; text-align: center; }
.credits { position: absolute; right: 0; bottom: 0; display: flex; height: 14px; background: rgba(245, 245, 245, .7); font: 10px/13px Roboto, sans-serif; color: #444; }
.credits span { box-sizing: border-box; text-align: center; white-space: nowrap; letter-spacing: -.05px; }
.c1 { width: 121px; }
.c2 { width: 70px; }
.c3 { width: 93px; }
.credits span + span { border-left: 1px solid #b8cdf0; }
.h2 { font-size: 30px; line-height: 34px; letter-spacing: .4px; -webkit-text-stroke: .8px #333; }
.related { margin-top: 20px; }
.panel { box-sizing: border-box; height: 137px; margin-top: 9px; padding: 19px 19px 0; border: 1px solid #dcdcdc; border-radius: 4px; background: linear-gradient(#e8e8e8, #f5f5f5); box-shadow: inset 0 1px 3px rgba(0, 0, 0, .05); }
.panel-title { display: flex; height: 31px; line-height: 34px; gap: 6px; border-bottom: 1px solid #e0e0e0; font-size: 21px; color: #428bca; }
.panel-title small { font-size: 16px; letter-spacing: -.5px; }
.expand { box-sizing: border-box; width: 24px; height: 22px; margin-top: 7px; padding: 3px 4px; border: 1px solid #ccc; border-radius: 3px; background: linear-gradient(#fff, #e6e6e6); }
.expand svg { display: block; }
.prow { margin-top: 20px; margin-left: -10px; }
.addlink { display: block; margin: 27px 0 0 13px; letter-spacing: .1px; }
.votes { margin-top: 48px; }
.table { width: 1140px; margin-top: 8px; border-collapse: collapse; table-layout: fixed; }
.table th, .table td { box-sizing: border-box; border: 1px solid #ddd; padding: 0 8px; text-align: left; }
.table th { height: 38px; border-bottom-width: 2px; }
.table td { background: #f9f9f9; }
.table .entry td { height: 38px; vertical-align: top; padding-top: 8px; }
.table .more td { height: 38px; }
.tiny { box-sizing: border-box; width: 55px; height: 21px; border: 1px solid #ccc; border-top-color: #b5b5b5; background: #fff; }
.cell { display: flex; align-items: center; gap: 4px; }
.bottom { margin-top: 20px; }
</style>
